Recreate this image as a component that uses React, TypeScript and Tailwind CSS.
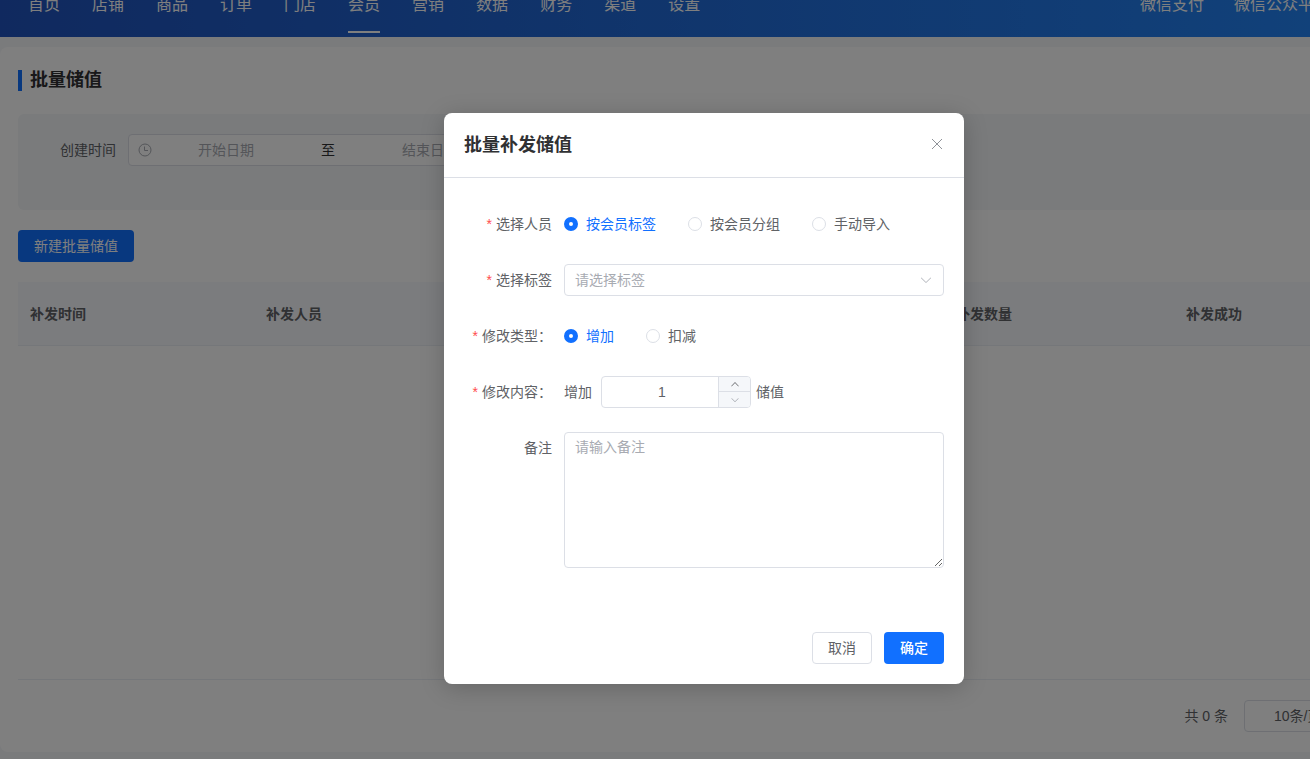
import { useState } from "react";

const NAV = ["首页", "店铺", "商品", "订单", "门店", "会员", "营销", "数据", "财务", "渠道", "设置"];
const SIDE_LINKS = ["微信支付", "微信公众平台"];

function Chevron({ up = false, size }: { up?: boolean; size: number }) {
  return (
    <svg viewBox="0 0 1024 1024" width={size} height={size} fill="currentColor" aria-hidden="true">
      {up ? (
        <path d="m488.8 344.3-339.8 355.6a32 32 0 0 0 0 44.7 29.4 29.4 0 0 0 42.7.1L512 408.6l320.4 336.1a29.4 29.4 0 0 0 42.7-.1 32 32 0 0 0 0-44.7L535.2 344.3a32 32 0 0 0-46.4 0z" />
      ) : (
        <path d="M831.9 340.9 512 652.7 192.1 340.9a30.6 30.6 0 0 0-42.7 0 29.1 29.1 0 0 0 0 41.6L489.7 714.2a32 32 0 0 0 44.7 0l340.2-331.7a29.1 29.1 0 0 0 0-41.7 30.6 30.6 0 0 0-42.7.1z" />
      )}
    </svg>
  );
}

function Header() {
  return (
    <header className="flex h-[37px] items-end justify-between overflow-hidden bg-linear-to-r from-[#2053be] to-[#2286f8] pr-[78px] pb-1 pl-7 text-base text-white">
      <nav className="flex gap-8">
        {NAV.map(name => (
          <a key={name} href="#" className="flex flex-col gap-3.5">
            <span className="leading-6">{name}</span>
            <span className={name === "会员" ? "h-0.5 bg-white" : "h-0.5"} />
          </a>
        ))}
      </nav>
      <div className="flex gap-[30px] pb-4">
        {SIDE_LINKS.map(name => (
          <a key={name} href="#" className="leading-6">{name}</a>
        ))}
      </div>
    </header>
  );
}

function Filters() {
  return (
    <section className="mt-[23px] flex h-24 items-start rounded-md bg-[#f4f6f9] px-[42px] pt-5">
      <label htmlFor="start" className="pr-3 leading-8">创建时间</label>
      <div className="flex h-8 w-[390px] items-center rounded border border-[#dcdfe6] bg-white px-[9px]">
        <svg viewBox="0 0 14 14" width="14" height="14" fill="none" stroke="#a8abb2" aria-hidden="true">
          <circle cx="7" cy="7" r="6" />
          <path d="M6.5 3.5v4h3.5" />
        </svg>
        <input
          id="start"
          placeholder="开始日期"
          className="ml-1 w-[140px] bg-transparent text-center outline-none placeholder:text-[#a8abb2]"
        />
        <span className="w-16 text-center text-[#303133]">至</span>
        <input
          aria-label="结束日期"
          placeholder="结束日期"
          className="w-[140px] bg-transparent text-center outline-none placeholder:text-[#a8abb2]"
        />
      </div>
    </section>
  );
}

function RecordTable() {
  return (
    <div className="mt-5 min-h-[398px] border-b border-[#ebeef5]">
      <table className="w-full table-fixed border-separate border-spacing-0 text-left">
        <colgroup>
          <col className="w-[236px]" />
          <col className="w-[230px]" />
          <col className="w-[230px]" />
          <col className="w-[230px]" />
          <col className="w-[230px]" />
          <col />
        </colgroup>
        <thead>
          <tr className="h-16 bg-[#f7f9fc] text-[#606266]">
            <th className="border-b border-[#ebeef5] px-3">补发时间</th>
            <th className="border-b border-[#ebeef5] px-3">补发人员</th>
            <th className="border-b border-[#ebeef5]" />
            <th className="border-b border-[#ebeef5]" />
            <th className="border-b border-[#ebeef5] px-3">补发数量</th>
            <th className="border-b border-[#ebeef5] px-3">补发成功</th>
          </tr>
        </thead>
      </table>
    </div>
  );
}

interface RadioProps {
  name: string;
  options: string[];
  value: string;
  onChange: (v: string) => void;
}

function RadioGroup({ name, options, value, onChange }: RadioProps) {
  return (
    <div className="flex h-8 items-center gap-8">
      {options.map(o => (
        <label key={o} className={o === value ? "flex items-center gap-2 text-[#1170ff]" : "flex items-center gap-2"}>
          <input
            type="radio"
            name={name}
            checked={o === value}
            onChange={() => onChange(o)}
            className="size-3.5 appearance-none rounded-full border border-[#dcdfe6] bg-white checked:border-[5px] checked:border-[#1170ff]"
          />
          {o}
        </label>
      ))}
    </div>
  );
}

function FieldLabel({ text, required, htmlFor }: { text: string; required?: boolean; htmlFor?: string }) {
  return (
    <label htmlFor={htmlFor} className="w-[100px] shrink-0 pr-3 text-right leading-8 whitespace-nowrap">
      {required && <span className="mr-1 text-[#ff4d4f]">*</span>}
      {text}
    </label>
  );
}

function StoreDialog() {
  const [target, setTarget] = useState("按会员标签");
  const [mode, setMode] = useState("增加");
  const [amount, setAmount] = useState(1);

  return (
    <div role="dialog" aria-labelledby="dialog-title" className="w-[520px] rounded-lg bg-white shadow-[0_4px_24px_rgba(0,0,0,0.2)]">
      <div className="flex h-[65px] items-center justify-between border-b border-[#dcdfe6] px-5">
        <h2 id="dialog-title" className="text-lg font-bold text-[#303133]">批量补发储值</h2>
        <button aria-label="关闭" className="pb-0.5 text-[#909399]">
          <svg viewBox="0 0 14 14" width="14" height="14" fill="none" stroke="currentColor" aria-hidden="true">
            <path d="M2 2l10 10M12 2L2 12" />
          </svg>
        </button>
      </div>

      <form className="flex flex-col gap-6 px-5 pt-[30px]">
        <div className="flex">
          <FieldLabel text="选择人员" required />
          <RadioGroup name="target" options={["按会员标签", "按会员分组", "手动导入"]} value={target} onChange={setTarget} />
        </div>

        <div className="flex">
          <FieldLabel text="选择标签" required htmlFor="tag" />
          <div className="relative flex-1">
            <select id="tag" className="h-8 w-full appearance-none rounded border border-[#dcdfe6] bg-white px-2.5 text-[#a8abb2] outline-none">
              <option>请选择标签</option>
            </select>
            <span className="pointer-events-none absolute top-[9px] right-[11px] text-[#b4b7bd]">
              <Chevron size={14} />
            </span>
          </div>
        </div>

        <div className="flex">
          <FieldLabel text="修改类型：" required />
          <RadioGroup name="mode" options={["增加", "扣减"]} value={mode} onChange={setMode} />
        </div>

        <div className="flex">
          <FieldLabel text="修改内容：" required htmlFor="amount" />
          <span className="leading-8">{mode}</span>
          <div className="mr-[5px] ml-[9px] flex h-8 w-[150px] overflow-hidden rounded border border-[#dcdfe6]">
            <input
              id="amount"
              value={amount}
              onChange={e => setAmount(Number(e.target.value) || 1)}
              className="min-w-0 flex-1 pl-1 text-center outline-none"
            />
            <div className="grid w-8 grid-rows-[15px_15px] border-l border-[#dcdfe6] bg-[#f5f7fa]">
              <button
                type="button"
                aria-label="加一"
                onClick={() => setAmount(v => v + 1)}
                className="flex items-center justify-center border-b border-[#dcdfe6]"
              >
                <Chevron up size={10} />
              </button>
              <button
                type="button"
                aria-label="减一"
                onClick={() => setAmount(v => Math.max(1, v - 1))}
                className="flex items-center justify-center text-[#a8abb2]"
              >
                <Chevron size={10} />
              </button>
            </div>
          </div>
          <span className="leading-8">储值</span>
        </div>

        <div className="flex">
          <FieldLabel text="备注" htmlFor="remark" />
          <textarea
            id="remark"
            placeholder="请输入备注"
            className="h-[136px] flex-1 resize-y rounded border border-[#dcdfe6] px-2.5 py-1 leading-5 outline-none placeholder:text-[#a8abb2]"
          />
        </div>
      </form>

      <div className="flex justify-end gap-3 px-5 pt-16 pb-5">
        <button className="h-8 w-15 rounded border border-[#dcdfe6] bg-white">取消</button>
        <button className="h-8 w-15 rounded bg-[#1170ff] font-medium text-white">确定</button>
      </div>
    </div>
  );
}

export default function App() {
  return (
    <div className="min-h-screen overflow-hidden font-['Liberation_Sans','Noto_Sans_CJK_SC',sans-serif] text-sm text-[#606266]">
      <div className="relative min-h-screen min-w-[1408px] bg-[#f4f6f9]">
        <Header />
        <main className="mt-2.5 rounded-lg bg-white px-[18px] pt-[23px] pb-5">
          <h1 className="flex items-center gap-2 text-lg leading-[21px] font-bold text-[#303133]">
            <span className="h-[21px] w-1 bg-[#1170ff]" />
            批量储值
          </h1>
          <Filters />
          <button className="mt-5 block h-8 w-[116px] rounded bg-[#1170ff] text-white">新建批量储值</button>
          <RecordTable />
          <div className="mt-5 flex items-center justify-end gap-4 pr-9">
            <span>共 0 条</span>
            <select
              aria-label="每页条数"
              className="h-8 w-[110px] appearance-none rounded border border-[#dcdfe6] bg-white pl-[29px] outline-none"
            >
              <option>10条/页</option>
            </select>
          </div>
        </main>
        <div className="absolute inset-0 flex items-start justify-center bg-black/50 pt-[113px]">
          <StoreDialog />
        </div>
      </div>
    </div>
  );
}
